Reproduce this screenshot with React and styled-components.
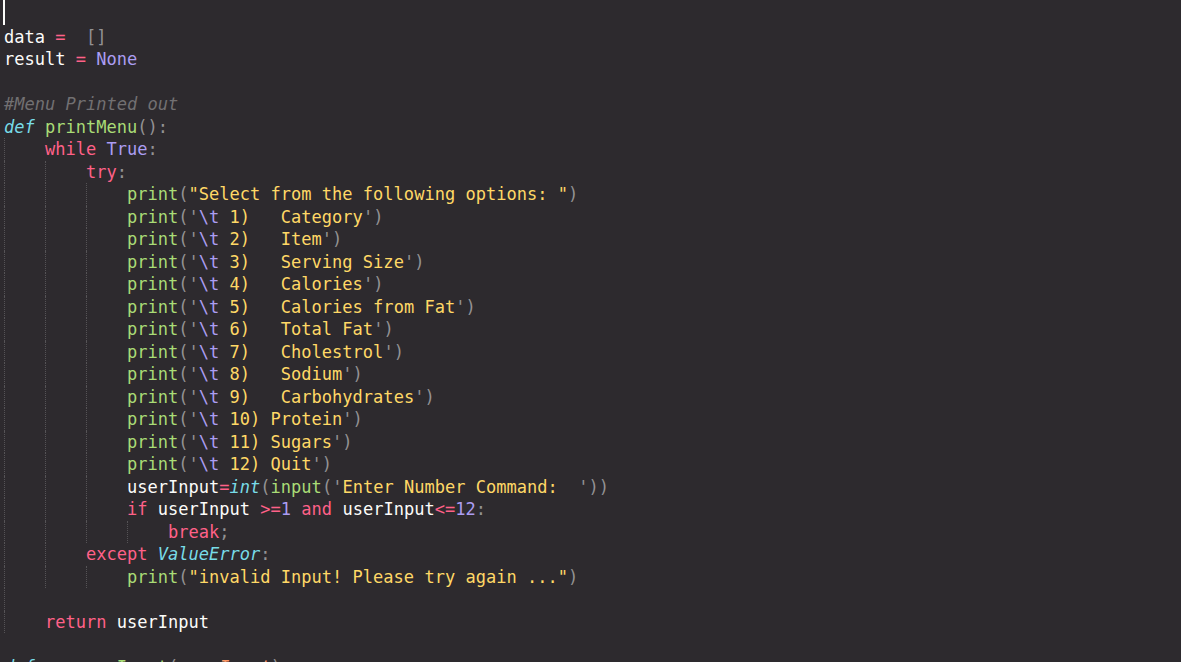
import { createGlobalStyle, styled } from "styled-components";

const GlobalStyle = createGlobalStyle`
  html, body {
    margin: 0;
    padding: 0;
    background: #2d2a2e;
    overflow: hidden;
  }
`;

const Editor = styled.div`
  height: 662px;
  overflow: hidden;
  padding: 3px 0 0 4px;
  box-sizing: border-box;
  background: #2d2a2e;
  font-family: "DejaVu Sans Mono", "Liberation Mono", monospace;
  font-size: 17.05px;
  color: #fcfcfa;
`;

const Line = styled.div`
  display: flex;
  height: 22.5px;
  line-height: 22.5px;
  white-space: pre;
`;

const Guide = styled.span`
  display: inline-block;
  width: 4ch;
  flex: none;
  height: 100%;
  box-sizing: border-box;
  border-left: ${(p) => (p.$on ? "1px dotted #555356" : "1px solid transparent")};
`;

const Cursor = styled.span`
  display: inline-block;
  width: 2px;
  height: 25px;
  margin: -3px 0 0 -1px;
  background: #fcfcfa;
`;

const colors = {
  v: "#fcfcfa",
  k: "#ff6188",
  d: "#78dce8",
  f: "#a9dc76",
  c: "#ab9df2",
  s: "#ffd866",
  p: "#939293",
  m: "#727072",
  a: "#fc9867",
};

const Tok = styled.span`
  color: ${(p) => colors[p.$k] || "#fcfcfa"};
  font-style: ${(p) => (p.$i ? "italic" : "normal")};
`;

const menu = [
  "1)   Category",
  "2)   Item",
  "3)   Serving Size",
  "4)   Calories",
  "5)   Calories from Fat",
  "6)   Total Fat",
  "7)   Cholestrol",
  "8)   Sodium",
  "9)   Carbohydrates",
  "10) Protein",
  "11) Sugars",
  "12) Quit",
];

// g: indent guides per level, t: [colour kind, text, italic]
const lines = [
  { cursor: true },
  { g: [], t: [["v", "data "], ["k", "="], ["v", "  "], ["p", "[]"]] },
  { g: [], t: [["v", "result "], ["k", "="], ["v", " "], ["c", "None"]] },
  { g: [], t: [] },
  { g: [], t: [["m", "#Menu Printed out", 1]] },
  { g: [], t: [["d", "def", 1], ["v", " "], ["f", "printMenu"], ["p", "():"]] },
  { g: [1], t: [["k", "while"], ["v", " "], ["c", "True"], ["p", ":"]] },
  { g: [1, 1], t: [["k", "try"], ["p", ":"]] },
  {
    g: [1, 1, 1],
    t: [["f", "print"], ["p", "("], ["s", '"Select from the following options: "'], ["p", ")"]],
  },
  ...menu.map((label) => ({
    g: [1, 1, 1],
    t: [
      ["f", "print"],
      ["p", "('"],
      ["c", "\\t"],
      ["s", " " + label],
      ["p", "')"],
    ],
  })),
  {
    g: [1, 1, 1],
    t: [
      ["v", "userInput"],
      ["k", "="],
      ["d", "int", 1],
      ["p", "("],
      ["f", "input"],
      ["p", "('"],
      ["s", "Enter Number Command:  "],
      ["p", "'))"],
    ],
  },
  {
    g: [1, 1, 1],
    t: [
      ["k", "if"],
      ["v", " userInput "],
      ["k", ">="],
      ["c", "1"],
      ["v", " "],
      ["k", "and"],
      ["v", " userInput"],
      ["k", "<="],
      ["c", "12"],
      ["p", ":"],
    ],
  },
  { g: [1, 1, 1, 1], t: [["k", "break"], ["p", ";"]] },
  { g: [1, 1], t: [["k", "except"], ["v", " "], ["d", "ValueError", 1], ["p", ":"]] },
  {
    g: [1, 1, 1],
    t: [["f", "print"], ["p", "("], ["s", '"invalid Input! Please try again ..."'], ["p", ")"]],
  },
  { g: [1], t: [] },
  { g: [1], t: [["k", "return"], ["v", " userInput"]] },
  { g: [], t: [] },
  {
    g: [],
    t: [
      ["d", "def", 1],
      ["v", " "],
      ["f", "processInput"],
      ["p", "("],
      ["a", "userInput", 1],
      ["p", "):"],
    ],
  },
];

function CodeLine({ line }) {
  if (line.cursor) {
    return (
      <Line>
        <Cursor />
      </Line>
    );
  }
  return (
    <Line>
      {line.g.map((on, i) => (
        <Guide key={i} $on={on} />
      ))}
      {line.t.map(([k, text, it], i) => (
        <Tok key={i} $k={k} $i={it}>
          {text}
        </Tok>
      ))}
    </Line>
  );
}

export default function App() {
  return (
    <Editor>
      <GlobalStyle />
      {lines.map((line, i) => (
        <CodeLine key={i} line={line} />
      ))}
    </Editor>
  );
}
